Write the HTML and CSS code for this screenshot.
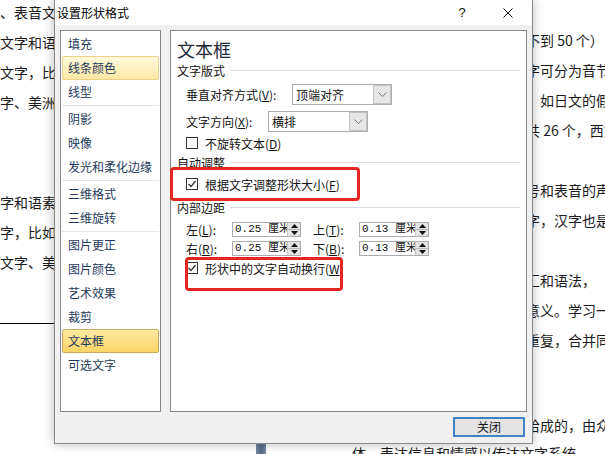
FILE: index.html
```html
<!DOCTYPE html>
<html lang="zh-CN">

<head>
  <meta charset="UTF-8" />
  <title>设置形状格式</title>
  <link rel="stylesheet" href="styles.css">
</head>

<body>
  <!-- 背后的文档页面 -->
  <div class="doc">
    <div class="doc-cols">
      <div class="col-left">
        <p>、表音文</p>
        <p>文字和语</p>
        <p>文字，比</p>
        <p>字、美洲</p>
        <div class="gap-70"></div>
        <p>字和语素</p>
        <p>字，比如</p>
        <p>文字、美</p>
        <div class="doc-rule"></div>
      </div>
      <div class="col-right">
        <p>不到 50 个）</p>
        <p>字可分为音节</p>
        <p>，如日文的假名</p>
        <p>共 26 个，西文</p>
        <div class="gap-30"></div>
        <p>号和表音的声</p>
        <p>字，汉字也是</p>
        <div class="gap-30"></div>
        <p>汇和语法，</p>
        <p>意义。学习一</p>
        <p>重复，合并同</p>
        <div class="gap-55"></div>
        <p>拾成的，由众</p>
      </div>
    </div>
    <div class="doc-tail">
      <span class="ruler"></span>
      <p>体，表达信息和情感以传达文字系统</p>
    </div>
  </div>

  <!-- 设置形状格式 对话框 -->
  <div class="dialog">
    <div class="titlebar">
      <span class="title">设置形状格式</span>
      <span class="tb-btn help">?</span>
      <span class="tb-btn close">
        <svg width="10" height="10" viewBox="0 0 10 10">
          <line x1="0.5" y1="0.5" x2="9.5" y2="9.5" stroke="#111" stroke-width="1" />
          <line x1="9.5" y1="0.5" x2="0.5" y2="9.5" stroke="#111" stroke-width="1" />
        </svg>
      </span>
    </div>

    <div class="dlg-body">
      <ul class="nav">
        <li>填充</li>
        <li class="hover">线条颜色</li>
        <li>线型</li>
        <li class="sep"></li>
        <li>阴影</li>
        <li>映像</li>
        <li>发光和柔化边缘</li>
        <li class="sep"></li>
        <li>三维格式</li>
        <li>三维旋转</li>
        <li class="sep"></li>
        <li>图片更正</li>
        <li>图片颜色</li>
        <li>艺术效果</li>
        <li>裁剪</li>
        <li class="active">文本框</li>
        <li>可选文字</li>
      </ul>

      <div class="panel">
        <div class="heading">文本框</div>

        <div class="sec"><span>文字版式</span><i></i></div>

        <div class="row row-combo1">
          <span class="lbl lbl-w1">垂直对齐方式(<u>V</u>):</span>
          <span class="combo">
            <span class="combo-text">顶端对齐</span>
            <span class="combo-btn">
              <svg width="9" height="5" viewBox="0 0 9 5"><polyline points="0.5,0.5 4.5,4.5 8.5,0.5" fill="none" stroke="#7a7a7a" /></svg>
            </span>
          </span>
        </div>

        <div class="row row-combo2">
          <span class="lbl lbl-w2">文字方向(<u>X</u>):</span>
          <span class="combo">
            <span class="combo-text">横排</span>
            <span class="combo-btn">
              <svg width="9" height="5" viewBox="0 0 9 5"><polyline points="0.5,0.5 4.5,4.5 8.5,0.5" fill="none" stroke="#7a7a7a" /></svg>
            </span>
          </span>
        </div>

        <div class="row chk-row chk1">
          <svg class="chk" width="12" height="12" viewBox="0 0 12 12"><rect x="0.5" y="0.5" width="11" height="11" fill="#fff" stroke="#333" /></svg>
          <span>不旋转文本(<u>D</u>)</span>
        </div>

        <div class="sec sec2"><span>自动调整</span><i></i></div>

        <div class="row chk-row chk2">
          <svg class="chk" width="12" height="12" viewBox="0 0 12 12"><rect x="0.5" y="0.5" width="11" height="11" fill="#fff" stroke="#333" /><polyline points="2.5,6 5,8.5 9.5,3" fill="none" stroke="#333" stroke-width="1.2" /></svg>
          <span>根据文字调整形状大小(<u>F</u>)</span>
        </div>

        <div class="sec sec3"><span>内部边距</span><i></i></div>

        <div class="row spin-row spin1">
          <span class="lbl lbl-s">左(<u>L</u>):</span>
          <span class="spin">
            <span class="spin-text">0.25 厘米</span>
            <span class="spin-btn">
              <span><svg width="7" height="4" viewBox="0 0 7 4"><polygon points="0,4 3.5,0 7,4" fill="#111" /></svg></span>
              <span><svg width="7" height="4" viewBox="0 0 7 4"><polygon points="0,0 7,0 3.5,4" fill="#111" /></svg></span>
            </span>
          </span>
          <span class="lbl lbl-s lbl-s2">上(<u>T</u>):</span>
          <span class="spin spin-b">
            <span class="spin-text">0.13 厘米</span>
            <span class="spin-btn">
              <span><svg width="7" height="4" viewBox="0 0 7 4"><polygon points="0,4 3.5,0 7,4" fill="#111" /></svg></span>
              <span><svg width="7" height="4" viewBox="0 0 7 4"><polygon points="0,0 7,0 3.5,4" fill="#111" /></svg></span>
            </span>
          </span>
        </div>

        <div class="row spin-row spin2">
          <span class="lbl lbl-s">右(<u>R</u>):</span>
          <span class="spin">
            <span class="spin-text">0.25 厘米</span>
            <span class="spin-btn">
              <span><svg width="7" height="4" viewBox="0 0 7 4"><polygon points="0,4 3.5,0 7,4" fill="#111" /></svg></span>
              <span><svg width="7" height="4" viewBox="0 0 7 4"><polygon points="0,0 7,0 3.5,4" fill="#111" /></svg></span>
            </span>
          </span>
          <span class="lbl lbl-s lbl-s2">下(<u>B</u>):</span>
          <span class="spin spin-b">
            <span class="spin-text">0.13 厘米</span>
            <span class="spin-btn">
              <span><svg width="7" height="4" viewBox="0 0 7 4"><polygon points="0,4 3.5,0 7,4" fill="#111" /></svg></span>
              <span><svg width="7" height="4" viewBox="0 0 7 4"><polygon points="0,0 7,0 3.5,4" fill="#111" /></svg></span>
            </span>
          </span>
        </div>

        <div class="row chk-row chk3">
          <svg class="chk" width="12" height="12" viewBox="0 0 12 12"><rect x="0.5" y="0.5" width="11" height="11" fill="#fff" stroke="#333" /><polyline points="2.5,6 5,8.5 9.5,3" fill="none" stroke="#333" stroke-width="1.2" /></svg>
          <span>形状中的文字自动换行(<u>W</u>)</span>
        </div>
      </div>
    </div>

    <div class="dlg-foot">
      <button class="btn">关闭</button>
    </div>
  </div>

  <!-- 红色标注 -->
  <div class="mark mark-1"></div>
  <div class="mark mark-2"></div>
</body>

</html>
```

FILE: styles.css
```css
* {
  padding: 0;
  margin: 0;
  list-style: none;
}

body {
  width: 605px;
  height: 454px;
  overflow: hidden;
  position: relative;
  background: #fff;
  font-family: "Noto Sans CJK SC", "Liberation Sans", sans-serif;
}

/* 文档 */
.doc {
  width: 605px;
  color: #1a1a1a;
  font-size: 14px;
}

.doc p {
  line-height: 30px;
  height: 30px;
  white-space: nowrap;
}

.doc-cols {
  display: flex;
  align-items: flex-start;
}

.col-left {
  width: 532px;
  flex: none;
  margin-top: -3px;
}

/* 只露出对话框左边的部分 */
.col-left p {
  width: 54px;
  overflow: hidden;
}

.col-right {
  flex: 1;
  overflow: hidden;
  padding-top: 25px;
}

.col-right p {
  text-indent: -6px;
}

.gap-70 {
  height: 70px;
}

.gap-30 {
  height: 30px;
}

.gap-55 {
  height: 55px;
}

.doc-rule {
  margin-top: 46px;
  width: 54px;
  border-top: 1px solid #000;
}

.doc-tail {
  display: flex;
  align-items: flex-start;
}

.ruler {
  width: 10px;
  height: 11px;
  margin: 3px 0 0 256px;
  background: linear-gradient(90deg, #7688a3, #586a86 50%, #7688a3);
  flex: none;
}

.doc .doc-tail p {
  margin: 4px 0 0 86px;
  line-height: 18px;
  height: 18px;
}

/* 对话框 */
.dialog {
  position: absolute;
  left: 54px;
  top: -1px;
  width: 479px;
  height: 445px;
  box-sizing: border-box;
  border: 1px solid #8c8c8c;
  background: #f0f0f0;
  box-shadow: 0 0 10px rgba(0, 0, 0, 0.28);
  display: flex;
  flex-direction: column;
  font-size: 12px;
  color: #111;
}

.titlebar {
  height: 25px;
  flex: none;
  background: #fff;
  display: flex;
  align-items: center;
  padding-left: 2px;
}

.title {
  font-size: 12px;
  color: #000;
}

.tb-btn {
  width: 46px;
  height: 25px;
  display: flex;
  align-items: center;
  justify-content: center;
}

.help {
  margin-left: auto;
  font-size: 13px;
  font-family: "Liberation Sans", sans-serif;
}

.close {
  margin-right: 1px;
}

.dlg-body {
  display: flex;
  gap: 9px;
  padding: 5px 5px 0 5px;
  height: 382px;
  flex: none;
}

.nav {
  width: 101px;
  box-sizing: border-box;
  border: 1px solid #828790;
  background: #fff;
  padding: 1px;
  color: #1e395b;
}

.nav li {
  height: 24px;
  box-sizing: border-box;
  border: 1px solid transparent;
  border-radius: 2px;
  padding-left: 5px;
  line-height: 22px;
  white-space: nowrap;
}

.nav li.sep {
  height: 1px;
  border: 0;
  border-radius: 0;
  margin: 1px 0;
  background: #e6e6e6;
}

.nav li.hover {
  border-color: #ecd186;
  background: linear-gradient(#fff8dc, #fde9a6);
}

.nav li.active {
  border-color: #c9a85c;
  background: linear-gradient(#fee9a2, #fbd466);
}

.panel {
  width: 357px;
  box-sizing: border-box;
  border: 1px solid #828790;
  background: #fff;
  padding: 6px 6px 0 6px;
  display: flex;
  flex-direction: column;
}

.heading {
  height: 24px;
  line-height: 24px;
  font-size: 18px;
  color: #1e2a3a;
}

.sec {
  height: 18px;
  display: flex;
  align-items: center;
  gap: 5px;
}

.sec i {
  flex: 1;
  height: 1px;
  background: #d8dde3;
}

.sec2 {
  margin-top: 2px;
}

.sec3 {
  margin-top: 6px;
}

.row {
  display: flex;
  align-items: center;
  padding-left: 9px;
  flex: none;
}

.row-combo1 {
  margin-top: 5px;
  height: 21px;
}

.row-combo2 {
  margin-top: 6px;
  height: 21px;
}

.lbl-w1 {
  width: 106px;
}

.lbl-w2 {
  width: 82px;
}

.combo {
  width: 100px;
  height: 21px;
  box-sizing: border-box;
  border: 1px solid #abadb3;
  background: #fff;
  display: flex;
}

.combo-text {
  flex: 1;
  padding-left: 3px;
  line-height: 19px;
}

.combo-btn {
  width: 18px;
  box-sizing: border-box;
  border: 1px solid #c2c2c2;
  background: #e6e6e6;
  display: flex;
  align-items: center;
  justify-content: center;
}

.chk-row {
  height: 16px;
  gap: 7px;
}

.chk {
  flex: none;
}

.chk1 {
  margin-top: 3px;
}

.chk2 {
  margin-top: 5px;
}

.chk3 {
  margin-top: 4px;
}

.spin-row {
  height: 15px;
}

.spin1 {
  margin-top: 6px;
}

.spin2 {
  margin-top: 4px;
}

.lbl-s {
  width: 46px;
}

.lbl-s2 {
  margin-left: 12px;
}

.spin {
  width: 69px;
  height: 15px;
  box-sizing: border-box;
  border: 1px solid #abadb3;
  background: #fff;
  display: flex;
  overflow: hidden;
}

.spin-b {
  width: 70px;
}

.spin-text {
  flex: 1;
  overflow: hidden;
  white-space: nowrap;
  padding-left: 2px;
  line-height: 13px;
  font-size: 11px;
  font-family: "Liberation Mono", "Noto Sans CJK SC", monospace;
}

.spin-btn {
  width: 12px;
  flex: none;
  display: flex;
  flex-direction: column;
  border-left: 1px solid #c9c9c9;
  background: #e4e4e4;
}

.spin-btn span {
  flex: 1;
  display: flex;
  align-items: center;
  justify-content: center;
}

.spin-btn span + span {
  border-top: 1px solid #b8b8b8;
}

.dlg-foot {
  flex: 1;
  display: flex;
  justify-content: flex-end;
  padding: 5px 7px 0 0;
}

.btn {
  width: 72px;
  height: 20px;
  box-sizing: border-box;
  border: 2px solid #3d83c5;
  background: #e3e3e3;
  font-family: "Noto Sans CJK SC", sans-serif;
  font-size: 12px;
  color: #111;
  line-height: 14px;
}

/* 红色标注 */
.mark {
  position: absolute;
  box-sizing: border-box;
  border: 3px solid #e5251f;
  border-radius: 4px;
}

.mark-1 {
  left: 170px;
  top: 167px;
  width: 190px;
  height: 34px;
}

.mark-2 {
  left: 185px;
  top: 257px;
  width: 158px;
  height: 34px;
}
```
